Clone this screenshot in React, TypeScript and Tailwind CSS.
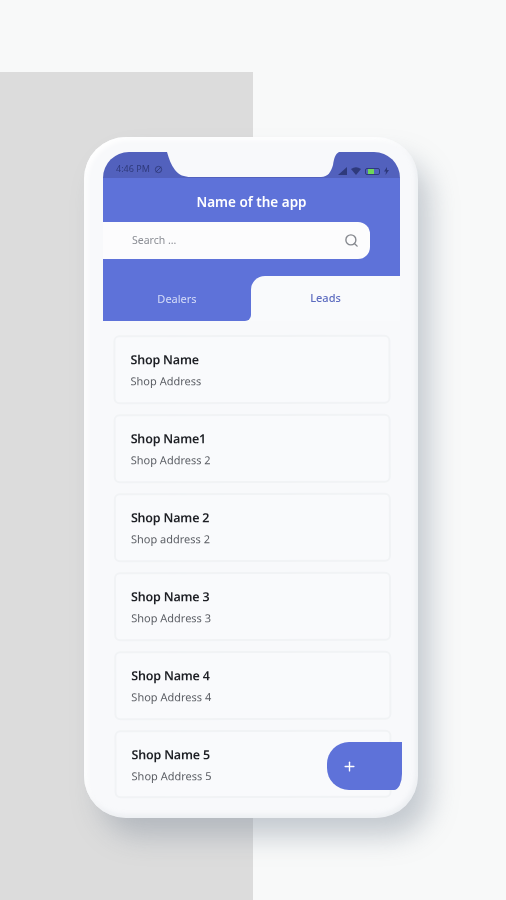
import { Search, Plus } from "lucide-react";

const shops = [
  ["Shop Name", "Shop Address"],
  ["Shop Name1", "Shop Address 2"],
  ["Shop Name 2", "Shop address 2"],
  ["Shop Name 3", "Shop Address 3"],
  ["Shop Name 4", "Shop Address 4"],
  ["Shop Name 5", "Shop Address 5"],
];

export default function App() {
  return (
    <div className="relative w-[506px] h-[900px] overflow-hidden bg-[#f8f9f9] pt-[137px] pl-[84px] font-['Noto_Sans',sans-serif]">
      <div className="absolute left-0 top-[72px] bottom-0 w-[253px] bg-[#dcdcdc]" />
      <div className="relative w-[334px] h-[681px] rounded-[42px] bg-[#f8f9fb] pt-[15px] pl-[19px] pr-[18px] shadow-[14px_20px_28px_-2px_rgba(125,135,150,0.42),inset_-2px_-3px_5px_rgba(200,206,215,0.25),inset_3px_3px_5px_#ffffff]">
        <div className="relative flex flex-col h-[648px] blur-[0.5px]">
          <div className="relative flex items-end justify-between h-[26px] rounded-t-[30px] bg-[#5261bd] pl-[13px] pr-[11px] pb-[3px] text-[9px] leading-[12px] text-[#2f3a7c]">
            <div className="flex items-center gap-[4px]">
              <span>4:46 PM</span>
              <svg width="9" height="9" viewBox="0 0 10 10" fill="none" stroke="currentColor" strokeWidth="1">
                <circle cx="5" cy="5" r="3.5" />
                <path d="M2 8 8 2" />
              </svg>
            </div>
            <div className="flex items-center gap-[4px]">
              <svg width="9" height="8" viewBox="0 0 9 8" fill="currentColor"><path d="M0 8 9 0v8z" /></svg>
              <svg width="10" height="8" viewBox="0 0 10 8" fill="currentColor"><path d="M0 2Q5-1.500 10 2L5 8z" /></svg>
              <span className="flex items-center w-[15px] h-[7px] rounded-[2px] border border-[#2f3a7c] pl-[2px]"><span className="w-[6px] h-[5px] bg-[#6fd65a]" /></span>
              <svg width="5" height="8" viewBox="0 0 5 8" fill="currentColor"><path d="M3 0 0 4.500h2L1.500 8 5 3H3z" /></svg>
            </div>
            <svg className="absolute left-[60px] top-0" width="176" height="26" viewBox="0 0 176 26" fill="#f8f9fb">
              <path d="M4 0C6 7 8 13 12 18 16 23 21 25 28 25H158C165 25 168 20 170 13 171 7 172 2 176 0Z" />
            </svg>
          </div>
          <div className="flex flex-col bg-[#5e72d9] h-[98px] w-[297px]">
            <div className="flex items-center justify-center h-[44px] pt-[5px] text-[13.500px] font-semibold text-white">Name of the app</div>
            <div className="flex items-center justify-between w-[267px] h-[37px] rounded-r-[12px] bg-[#fcfcfd] pl-[29px] pr-[11px]">
              <span className="text-[10.500px] text-[#8a8d94]">Search ...</span>
              <Search size={15} strokeWidth={2.2} className="text-[#85888e]" />
            </div>
          </div>
          <div className="flex h-[45px] w-[297px] text-[11px]">
            <div className="flex items-center justify-center w-[148px] pt-[1px] rounded-br-[6px] bg-[#5e72d9] text-[#d5dcf8]">Dealers</div>
            <div className="flex-1 bg-[#5e72d9]">
              <div className="flex items-center justify-center h-full rounded-tl-[14px] bg-[#f9fafc] pb-[1px] text-[#5d6cc0] font-medium">Leads</div>
            </div>
          </div>
          <div className="flex-1 bg-[#f8f9fb]" />
          <div className="absolute left-[10.500px] top-[183px] w-[277px] flex flex-col gap-[10px] rotate-[-0.15deg]">
            {shops.map(([name, addr], i) => (
              <div
                key={name}
                className={`flex flex-col justify-center gap-[6px] rounded-[6px] border-2 border-[#f1f3f5] bg-[#f9fafc] pl-[15px] ${i === 5 ? "h-[68px]" : "h-[69px]"}`}
              >
                <div className="text-[12.500px] leading-[17px] font-semibold text-[#1d1f24] tracking-[-0.2px]">{name}</div>
                <div className="text-[11px] leading-[14px] text-[#5a5d63]">{addr}</div>
              </div>
            ))}
          </div>
          <div className="absolute left-[224px] top-[590px] flex items-center w-[75px] h-[48px] rounded-l-[22px] rounded-br-[8px_16px] bg-[#5e72d9] pl-[15px]">
            <Plus size={15} strokeWidth={2.2} className="text-white" />
          </div>
        </div>
      </div>
    </div>
  );
}
